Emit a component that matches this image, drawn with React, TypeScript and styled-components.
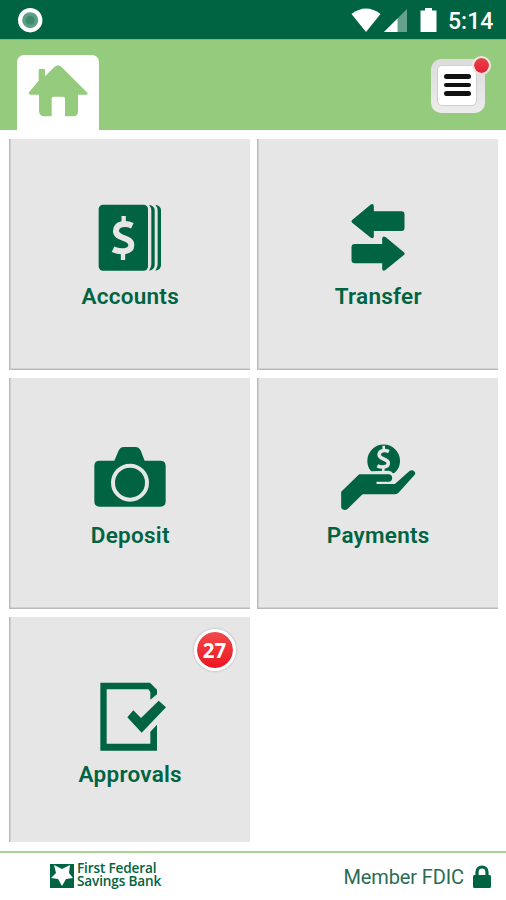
import React from "react";
import styled, { createGlobalStyle } from "styled-components";

const GREEN = "#006341";
const LIME = "#95cb7d";

const GlobalStyle = createGlobalStyle`
  * { box-sizing: border-box; }
  body { margin: 0; background: #fff; font-family: Roboto, "Liberation Sans", sans-serif; }
  svg { display: block; }
`;

const Screen = styled.div`
  display: flex;
  flex-direction: column;
  width: 506px;
  height: 900px;
  overflow: hidden;
  background: #fff;
`;

const StatusBar = styled.header`
  display: flex;
  flex: none;
  align-items: flex-start;
  justify-content: space-between;
  height: 39px;
  padding: 0 12px 0 18px;
  background: ${GREEN};
`;

const StatusIcons = styled.div`
  display: flex;
`;

const Clock = styled.span`
  width: 46px;
  margin-left: 11px;
  padding-top: 8px;
  color: #fff;
  font-size: 23px;
  font-weight: 500;
  line-height: 27px;
  white-space: nowrap;
`;

const NavBar = styled.nav`
  display: flex;
  flex: none;
  align-items: flex-end;
  justify-content: space-between;
  height: 91px;
  padding: 0 21px 0 16.5px;
  border-top: 1px solid #7eb672;
  background: ${LIME};
`;

const HomeTab = styled.div`
  width: 82.5px;
  height: 75.5px;
  padding: 8px 0 0 10.5px;
  border-radius: 7px 7px 0 0;
  background: #fff;
`;

const MenuButton = styled.div`
  position: relative;
  width: 54px;
  height: 54px;
  margin-bottom: 17.5px;
  padding: 6px 8px 7px 6px;
  border-radius: 10px;
  background: linear-gradient(#dcdcdc, #ececec);
`;

const MenuFace = styled.div`
  display: flex;
  flex-direction: column;
  align-items: center;
  justify-content: center;
  gap: 3.7px;
  height: 41px;
  border: 1px solid #cfcfd2;
  border-radius: 5px;
  background: #fff;
`;

const MenuLine = styled.span`
  width: 27px;
  height: 4.800px;
  border-radius: 3px;
  background: #111;
`;

const AlertDot = styled.span`
  position: absolute;
  top: -3px;
  right: -5.5px;
  width: 19px;
  height: 19px;
  border: 2px solid #f1e3df;
  border-radius: 50%;
  background: linear-gradient(#f0424c, #df1f35) border-box;
  background-clip: padding-box;
`;

const TileGrid = styled.main`
  display: grid;
  flex: none;
  grid-template-columns: 240.5px 240.5px;
  grid-template-rows: 231px 231px 225px;
  gap: 8px 7.5px;
  height: 721px;
  padding: 9px 8px 0 9px;
`;

const TileBox = styled.section<{ $cut?: boolean }>`
  position: relative;
  display: flex;
  flex-direction: column;
  align-items: center;
  padding: 61px 0 0 2px;
  background: #e6e6e6;
  box-shadow: inset 1px ${(p) => (p.$cut ? "0" : "-1px")} 0 #b9b9b9, inset 2px ${(p) => (p.$cut ? "0" : "-2px")} 0 #d0d0d0;
  color: ${GREEN};
`;

const TileIcon = styled.svg`
  width: 120px;
  height: 75px;
  margin-left: -2px;
  fill: ${GREEN};
`;

const TileLabel = styled.span`
  margin: 6.5px 0 0 0;
  font-size: 22.5px;
  font-weight: 600;
  line-height: 28px;
  letter-spacing: 0.26px;
`;

const Badge = styled.span`
  position: absolute;
  top: 12px;
  right: 14px;
  width: 42px;
  height: 42px;
  border: 3px solid #fff;
  border-radius: 50%;
  background: linear-gradient(#f04a4a, #ec1622) padding-box;
  box-shadow: 0 0 2px 0.5px #bbb;
  color: #fff;
  font: bold 20.5px/36px "Open Sans", sans-serif;
  text-align: center;
`;

const Footer = styled.footer`
  display: flex;
  flex: none;
  align-items: flex-start;
  justify-content: space-between;
  height: 49px;
  padding: 0 15px 0 50px;
  border-top: 2px solid #a9d296;
`;

const Brand = styled.div`
  display: flex;
  gap: 3px;
  padding-top: 9px;
`;

const BrandName = styled.div`
  color: ${GREEN};
  font: 600 13.6px/12.5px "Open Sans", sans-serif;
  letter-spacing: -0.15px;
  white-space: nowrap;
`;

const Member = styled.div`
  display: flex;
  gap: 9px;
  padding-top: 12px;
  color: #2b6b54;
  font-size: 20px;
  line-height: 24px;
  letter-spacing: -0.12px;
  white-space: nowrap;
`;

const Logo = styled.svg`
  margin-top: 2px;
`;

interface TileProps {
  label: string;
  viewBox: string;
  badge?: number;
  cut?: boolean;
  children: React.ReactNode;
}

function Tile({ label, viewBox, badge, cut, children }: TileProps) {
  return (
    <TileBox $cut={cut}>
      <TileIcon viewBox={viewBox}>{children}</TileIcon>
      <TileLabel>{label}</TileLabel>
      {badge !== undefined && <Badge>{badge}</Badge>}
    </TileBox>
  );
}

/* Dollar sign drawn as a stroked S with two short bars, centred on the origin. */
function Dollar({ x, y, scale }: { x: number; y: number; scale: number }) {
  return (
    <g transform={`translate(${x} ${y}) scale(${scale})`} fill="none" stroke="#e6e6e6" strokeWidth="18">
      <path d="M27-37C10-45-22-46-22-21C-22 4 24-4 24 21C24 44-12 43-31 34" />
      <path d="M1-66V-40M-1 38V66" strokeWidth="13" />
    </g>
  );
}

export default function App() {
  return (
    <Screen>
      <GlobalStyle />
      <StatusBar>
        <svg width="25" height="39" viewBox="0 0 25 39">
          <circle cx="12.2" cy="20.2" r="12.2" fill="#fff" />
          <circle cx="12.2" cy="20.2" r="8" fill="#5d9e84" />
          <circle cx="12.2" cy="20.2" r="4.5" fill="#3d8a6c" />
        </svg>
        <StatusIcons>
          <svg width="86" height="39" viewBox="351 0 86 39" fill="#fff">
            <path d="M351.5 14Q366 3 380.5 14L366 32Z" />
            <path d="M407 9V32H384Z" opacity=".4" />
            <path d="M397.5 18.5V32H384Z" />
            <path d="M425 8h7v2.500h4.5V32H420.500V10.500H425Z" />
          </svg>
          <Clock>5:14</Clock>
        </StatusIcons>
      </StatusBar>
      <NavBar>
        <HomeTab>
          <svg width="62" height="56" viewBox="81 187 186 168" fill={LIME}>
            <path d="M116 240V208q0-3 3-3h13q3 0 3 3v19l29-29q10-9 20 0l78 78q3 6-4 6h-24v53q-2 12-13 12h-26V294q0-6-6-6h-28q-6 0-6 6v53h-21q-16 0-17-15V282H91q-7-1-4-7Z" />
          </svg>
        </HomeTab>
        <MenuButton>
          <MenuFace>
            <MenuLine />
            <MenuLine />
            <MenuLine />
          </MenuFace>
          <AlertDot />
        </MenuButton>
      </NavBar>
      <TileGrid>
        <Tile label="Accounts" viewBox="-2 30 360 225">
          <rect x="87" y="44" width="148" height="198" rx="13" />
          <path d="M238 44q17 3 17 17V225q0 14-17 17q7-9 7-19V62q0-10-7-18ZM257 44q17 3 17 17V225q0 14-17 17q7-9 7-19V62q0-10-7-18Z" />
          <Dollar x={161} y={144} scale={1} />
        </Tile>
        <Tile label="Transfer" viewBox="-7.500 30 360 225">
          <path d="M98 90L153 44q9-5 10 5V64h83q9 0 9 9v41q0 9-9 9h-83v17q-1 7-9 3L98 98q-5-4 0-8Z" />
          <path d="M253 187L198 141q-9-5-10 5v16h-82q-10 0-10 10v39q0 9 10 9h82v17q1 8 9 4l56-46q5-4 0-8Z" />
        </Tile>
        <Tile label="Deposit" viewBox="-2 27 360 225">
          <path d="M90 92h44l12-28q5-13 17-13h34q12 0 17 13l11 28h47q16 0 16 16V214q0 16-16 16H90q-16 0-16-16V108q0-16 16-16Z" />
          <circle cx="181" cy="158" r="51" fill="none" stroke="#e6e6e6" strokeWidth="12" />
        </Tile>
        <Tile label="Payments" viewBox="-7.500 27 360 225">
          <path d="M155 124A49 49 0 1 1 230 124Q226 130 220 130Q216 122 207 122Z" />
          <Dollar x={192} y={87} scale={0.6} />
          <path d="M119 133h90q9 2 9 11t-9 11h-38v7h55L270 123q8-5 14 1q7 6-1 13l-46 51q-5 5-12 5h-96L84 237q-8 6-16 0q-3-2-3-6v-46Z" />
        </Tile>
        <Tile label="Approvals" viewBox="-2 24 360 225" badge={27} cut>
          <path d="M92 38H241L262 59V73L242 89V66L236 58H111V221H242V185L262 164V242H92Z" />
          <path d="M173 142L191 121L214 144L267 92L289 112L216 188Z" />
        </Tile>
      </TileGrid>
      <Footer>
        <Brand>
          <Logo width="24" height="24" viewBox="0 0 24 24">
            <path d="M0 0H24V24H0Z" fill={GREEN} />
            <path d="M4 1L12 5L20 1L19 9L23 14L16 15L12 22L8 15L1 14L6 9Z" fill="#fff" />
          </Logo>
          <BrandName>
            First Federal
            <br />
            Savings Bank
          </BrandName>
        </Brand>
        <Member>
          Member FDIC
          <svg width="18" height="23" viewBox="0 0 18 23">
            <path d="M4 11V7a5 5 0 0 1 10 0v4" fill="none" stroke={GREEN} strokeWidth="3.200" />
            <rect y="10" width="18" height="13" rx="1.500" fill={GREEN} />
          </svg>
        </Member>
      </Footer>
    </Screen>
  );
}
